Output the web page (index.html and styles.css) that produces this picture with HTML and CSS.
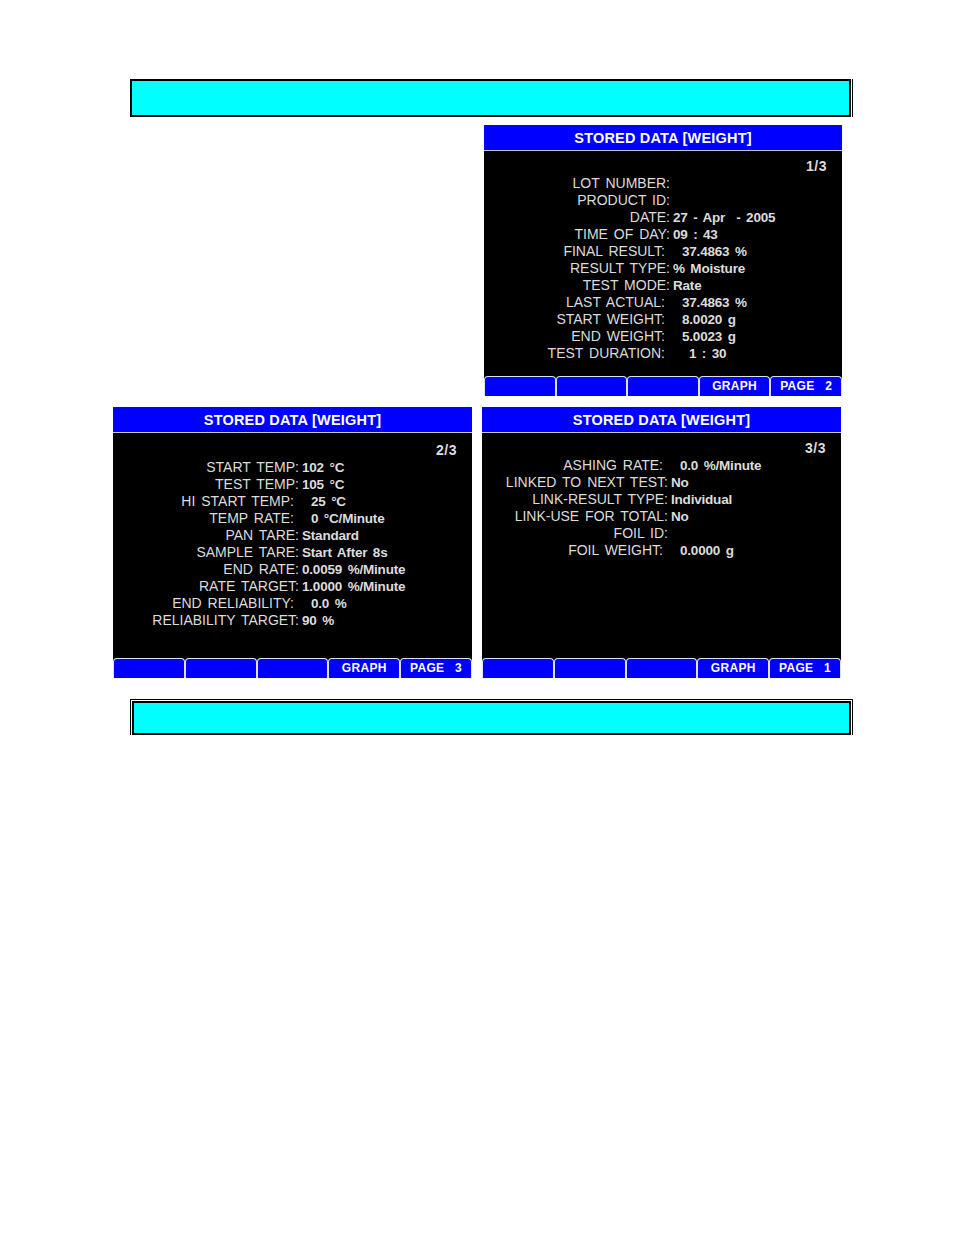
FILE: index.html
```html
<!DOCTYPE html>
<html>
<head>
<meta charset="utf-8">
<title>Stored Data</title>
<link rel="stylesheet" href="styles.css">
</head>
<body>
<div class="page">
  <div class="topbar"></div>

  <div class="row1">
    <div class="panel">
      <div class="head">STORED DATA [WEIGHT]</div>
      <div class="body">
        <div class="pg">1/3</div>
        <div class="r"><span class="lab">LOT NUMBER:</span><span class="val"></span></div>
        <div class="r"><span class="lab">PRODUCT ID:</span><span class="val"></span></div>
        <div class="r"><span class="lab">DATE:</span><span class="val">27 - Apr&nbsp; - 2005</span></div>
        <div class="r"><span class="lab">TIME OF DAY:</span><span class="val">09 : 43</span></div>
        <div class="r"><span class="lab s">FINAL RESULT:</span><span class="val s">37.4863 %</span></div>
        <div class="r"><span class="lab">RESULT TYPE:</span><span class="val">% Moisture</span></div>
        <div class="r"><span class="lab">TEST MODE:</span><span class="val">Rate</span></div>
        <div class="r"><span class="lab s">LAST ACTUAL:</span><span class="val s">37.4863 %</span></div>
        <div class="r"><span class="lab s">START WEIGHT:</span><span class="val s">8.0020 g</span></div>
        <div class="r"><span class="lab s">END WEIGHT:</span><span class="val s">5.0023 g</span></div>
        <div class="r"><span class="lab s">TEST DURATION:</span><span class="val w">1 : 30</span></div>
      </div>
      <div class="tabs"><div class="tab"></div><div class="tab"></div><div class="tab"></div><div class="tab">GRAPH</div><div class="tab">PAGE 2</div></div>
    </div>
  </div>

  <div class="row2">
    <div class="panel wide lower">
      <div class="head">STORED DATA [WEIGHT]</div>
      <div class="body">
        <div class="pg">2/3</div>
        <div class="r"><span class="lab">START TEMP:</span><span class="val">102 °C</span></div>
        <div class="r"><span class="lab">TEST TEMP:</span><span class="val">105 °C</span></div>
        <div class="r"><span class="lab s">HI START TEMP:</span><span class="val s">25 °C</span></div>
        <div class="r"><span class="lab s">TEMP RATE:</span><span class="val s">0 °C/Minute</span></div>
        <div class="r"><span class="lab">PAN TARE:</span><span class="val">Standard</span></div>
        <div class="r"><span class="lab">SAMPLE TARE:</span><span class="val">Start After 8s</span></div>
        <div class="r"><span class="lab">END RATE:</span><span class="val">0.0059 %/Minute</span></div>
        <div class="r"><span class="lab">RATE TARGET:</span><span class="val">1.0000 %/Minute</span></div>
        <div class="r"><span class="lab s">END RELIABILITY:</span><span class="val s">0.0 %</span></div>
        <div class="r"><span class="lab">RELIABILITY TARGET:</span><span class="val">90 %</span></div>
      </div>
      <div class="tabs"><div class="tab"></div><div class="tab"></div><div class="tab"></div><div class="tab">GRAPH</div><div class="tab">PAGE 3</div></div>
    </div>

    <div class="panel wide">
      <div class="head">STORED DATA [WEIGHT]</div>
      <div class="body">
        <div class="pg">3/3</div>
        <div class="r"><span class="lab s">ASHING RATE:</span><span class="val s">0.0 %/Minute</span></div>
        <div class="r"><span class="lab">LINKED TO NEXT TEST:</span><span class="val">No</span></div>
        <div class="r"><span class="lab">LINK-RESULT TYPE:</span><span class="val">Individual</span></div>
        <div class="r"><span class="lab">LINK-USE FOR TOTAL:</span><span class="val">No</span></div>
        <div class="r"><span class="lab">FOIL ID:</span><span class="val"></span></div>
        <div class="r"><span class="lab s">FOIL WEIGHT:</span><span class="val s">0.0000 g</span></div>
      </div>
      <div class="tabs"><div class="tab"></div><div class="tab"></div><div class="tab"></div><div class="tab">GRAPH</div><div class="tab">PAGE 1</div></div>
    </div>
  </div>

  <div class="bottombar"></div>
</div>
</body>
</html>
```
FILE: styles.css
```css
html, body {
  margin: 0;
  padding: 0;
  background: #ffffff;
}

.page {
  padding-top: 79px;
  font-family: "Liberation Sans", Arial, sans-serif;
}

.topbar {
  box-sizing: border-box;
  margin-left: 130px;
  width: 721px;
  height: 38px;
  background: #00ffff;
  border: 2px solid #000;
  box-shadow: 1px 0 0 #fff, 2px 0 0 #000;
}

.row1 {
  margin-top: 8px;
  padding-left: 484px;
}

.row2 {
  margin-top: 11px;
  padding-left: 113px;
  display: flex;
  gap: 10px;
}

.panel {
  width: 358px;
  display: flex;
  flex-direction: column;
}

.panel.wide {
  width: 359px;
}

.head {
  height: 25px;
  line-height: 26px;
  background: #0000ff;
  color: #fff;
  font-weight: bold;
  font-size: 14.5px;
  text-align: center;
  border-bottom: 1px solid #c8c8d8;
  letter-spacing: 0.2px;
}

.body {
  box-sizing: border-box;
  height: 225px;
  background: #000;
  padding-top: 7px;
  color: #dcdcdc;
}

.panel.lower .body {
  padding-top: 9px;
}

.pg {
  height: 17px;
  line-height: 17px;
  text-align: right;
  padding-right: 15px;
  font-weight: bold;
  font-size: 14px;
  letter-spacing: 0.5px;
}

.r {
  display: flex;
  height: 17px;
  line-height: 17px;
  white-space: nowrap;
}

.lab {
  box-sizing: border-box;
  flex: none;
  width: 186px;
  text-align: right;
  font-size: 14px;
  word-spacing: 2px;
}

.lab.s {
  padding-right: 5px;
}

.val {
  padding-left: 3px;
  font-weight: bold;
  font-size: 13.5px;
  word-spacing: 2px;
  letter-spacing: -0.2px;
}

.val.s {
  padding-left: 12px;
}

.val.w {
  padding-left: 19px;
}

.tabs {
  display: flex;
  height: 20px;
  background: #000;
}

.tab {
  box-sizing: border-box;
  flex: 1;
  background: #0000ff;
  border: 1px solid #e0e0f0;
  border-bottom: none;
  border-radius: 4px 4px 0 0;
  color: #fff;
  font-weight: bold;
  font-size: 12px;
  line-height: 19px;
  text-align: center;
  word-spacing: 7px;
  letter-spacing: 0.3px;
}

.bottombar {
  box-sizing: border-box;
  margin-top: 23px;
  margin-left: 132px;
  width: 719px;
  height: 34px;
  background: #00ffff;
  border: 2px solid #000;
  box-shadow: 0 0 0 1px #fff, 0 0 0 2px #000;
}
```
